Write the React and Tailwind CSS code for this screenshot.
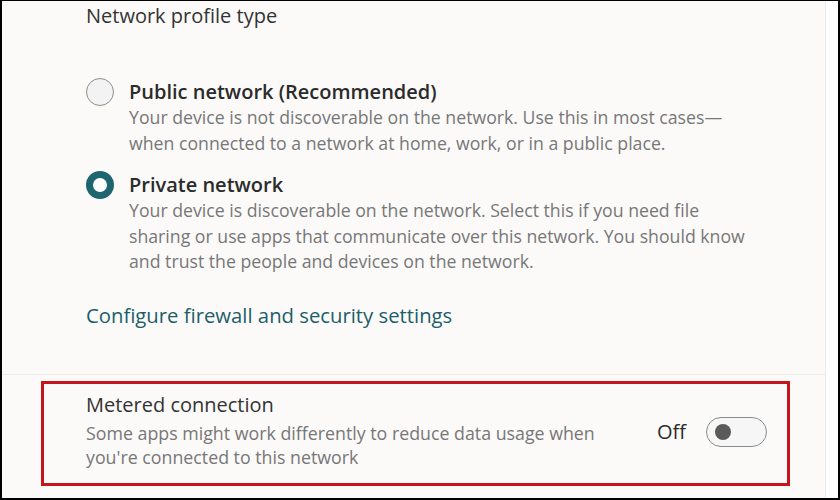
import React from "react";

const font = { fontFamily: '"Open Sans", "Noto Sans", sans-serif' };

const Radio = ({ checked }) =>
  checked ? (
    <div className="w-[28px] h-[28px] shrink-0 rounded-full border-[7px] border-[#1f6570] bg-white" />
  ) : (
    <div className="w-[28px] h-[28px] shrink-0 rounded-full border-[1.5px] border-[#8f8f8f] bg-[#f3f3f3]" />
  );

const Option = ({ checked, title, lines, className }) => (
  <div className={"flex items-start " + className}>
    <div className="w-[43px] h-[26px] flex items-center">
      <Radio checked={checked} />
    </div>
    <div className="flex flex-col">
      <div className="h-[26px] flex items-center text-[20px] font-semibold text-[#2b2b2b]">
        {title}
      </div>
      <div className="text-[17.7px] leading-[25.5px] text-[#777777] whitespace-nowrap">
        {lines.map((l) => (
          <div key={l}>{l}</div>
        ))}
      </div>
    </div>
  </div>
);

export default function App() {
  return (
    <div
      style={font}
      className="w-[840px] h-[500px] bg-white border-t border-l-2 border-r-2 border-b-2 border-black flex overflow-hidden"
    >
      <div className="w-[824px] h-full bg-[#fbfaf9] border-r border-[#ececec] flex flex-col">
        <div className="h-[374px] border-b border-[#ebebeb] pl-[84px] flex flex-col">
          <div className="mt-[3px] h-[24px] flex items-center text-[20px] text-[#333333]">
            Network profile type
          </div>
          <Option
            className="mt-[51px]"
            title="Public network (Recommended)"
            lines={[
              "Your device is not discoverable on the network. Use this in most cases—",
              "when connected to a network at home, work, or in a public place.",
            ]}
          />
          <Option
            className="mt-[16px]"
            checked
            title="Private network"
            lines={[
              "Your device is discoverable on the network. Select this if you need file",
              "sharing or use apps that communicate over this network. You should know",
              "and trust the people and devices on the network.",
            ]}
          />
          <div className="mt-[28px] h-[26px] flex items-center text-[20.3px] text-[#1d5e6a]">
            Configure firewall and security settings
          </div>
        </div>
        <div className="mt-[6px] ml-[39px] w-[749px] h-[105px] border-[3px] border-[#c4141c] flex items-center pl-[42px] pr-[20px]">
          <div className="flex flex-col flex-1 -mt-[5px]">
            <div className="h-[24px] flex items-center text-[20px] text-[#333333]">
              Metered connection
            </div>
            <div className="mt-[4px] text-[17.8px] leading-[24px] text-[#777777] whitespace-nowrap">
              <div>Some apps might work differently to reduce data usage when</div>
              <div>you're connected to this network</div>
            </div>
          </div>
          <div className="flex items-center -mt-[4px]">
            <span className="text-[20px] text-[#2b2b2b] mr-[20px]">Off</span>
            <div className="w-[61px] h-[30px] rounded-full border-[1.5px] border-[#8a8a8a] bg-[#f6f6f6] flex items-center pl-[8px]">
              <div className="w-[16px] h-[16px] rounded-full bg-[#5a5a5a]" />
            </div>
          </div>
        </div>
      </div>
    </div>
  );
}
